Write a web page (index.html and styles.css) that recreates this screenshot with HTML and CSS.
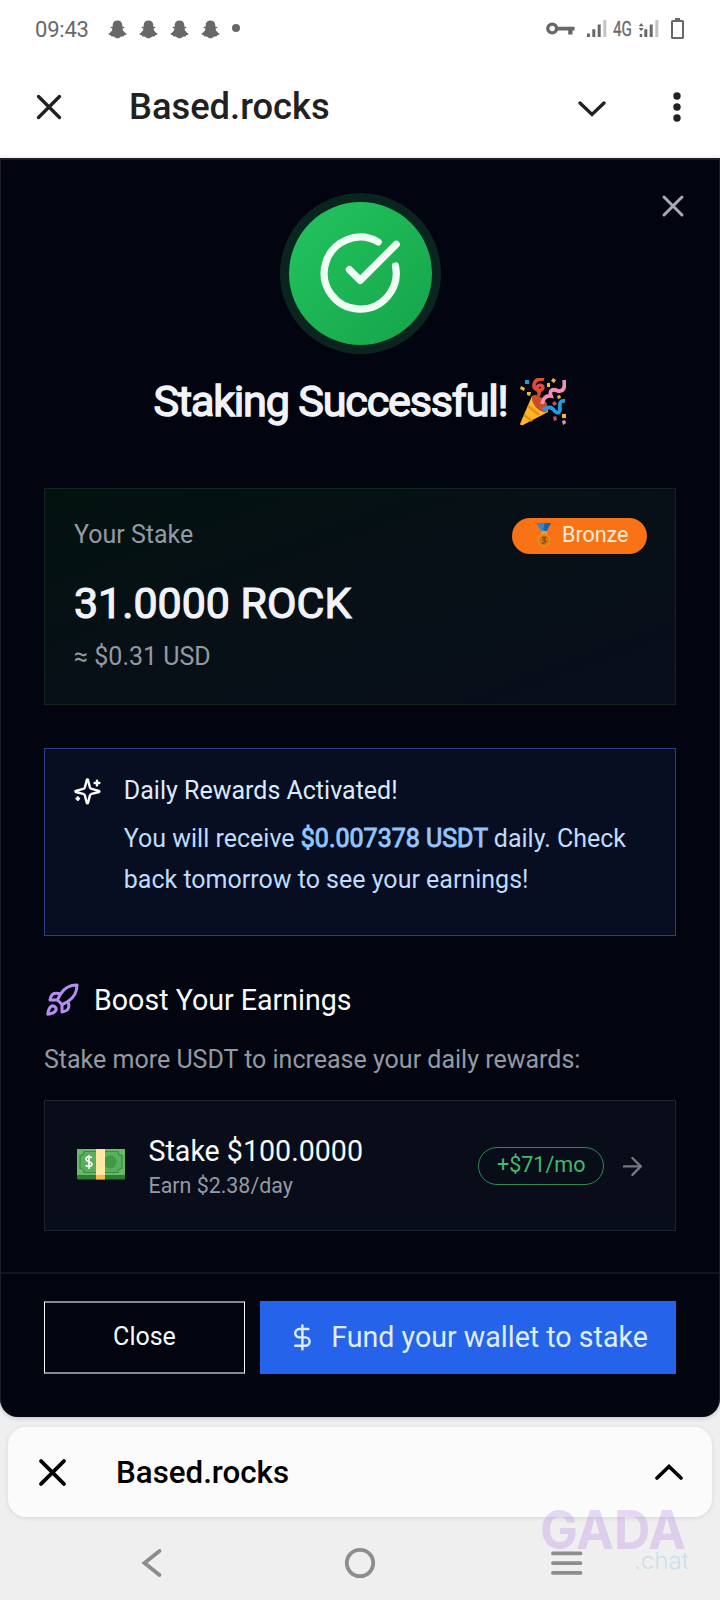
FILE: index.html
```html
<!DOCTYPE html>
<html lang="en">
<head>
<meta charset="utf-8">
<meta name="viewport" content="width=device-width, initial-scale=1">
<title>Based.rocks</title>
<link rel="stylesheet" href="styles.css">
</head>
<body>
<svg class="defs" aria-hidden="true">
  <symbol id="ghost" viewBox="0 0 19 19"><path d="M9.500 .5c-3 0-4.800 2-4.800 4.700v1.600c-.7.200-1.700-.2-2.100.3-.4.700.8 1.300 1.900 1.700-.4 2-2 3.900-4 5-.5.500.6 1.200 2.200 1.500.5.100.2 1.200.8 1.300.9.100 2-.2 3 .3.900.6 1.700 1.400 3 1.400s2.100-.8 3-1.400c1-.5 2.100-.2 3-.3.600-.1.300-1.200.8-1.300 1.600-.3 2.700-1 2.200-1.500-2-1.100-3.600-3-4-5 1.100-.4 2.300-1 1.900-1.700-.4-.5-1.400-.1-2.100-.3V5.200C14.300 2.500 12.500.5 9.500.5z"/></symbol>
  <symbol id="cross" viewBox="0 0 24 24"><path d="M18 6 6 18M6 6l12 12"/></symbol>
</svg>

<div class="status">
  <span class="clock">09:43</span>
  <div class="ghosts">
    <svg><use href="#ghost"/></svg><svg><use href="#ghost"/></svg><svg><use href="#ghost"/></svg><svg><use href="#ghost"/></svg>
    <i class="more-dot"></i>
  </div>
  <div class="signals">
    <svg class="key" viewBox="0 0 29 13"><circle cx="6.200" cy="6.500" r="4.400" fill="none" stroke="#686868" stroke-width="3.400"/><path d="M11 4.700h17.500v3.800h-2v4h-4.300v-4H11z"/></svg>
    <svg class="bars" viewBox="0 0 20 18"><path d="M0 13.500h3V17H0zM5.300 9.300h3V17h-3zM10.700 4.500h3V17h-3z"/><path class="weak" d="M16.300 0h3v17h-3z"/></svg>
    <span class="net">4G</span>
    <svg class="bars" viewBox="0 0 20 18"><path d="M.7 14h2.500v3H.7zM5.300 9.300h3V17h-3zM10.700 4.500h3V17h-3zM2.200 3l2.500 3.300H-.3zM2.200 11.300-.3 8h5z"/><path class="weak" d="M16.300 0h3v17h-3z"/></svg>
    <svg class="battery" viewBox="0 0 13 21"><path d="M4 0h5v3H4z"/><rect x="1" y="3" width="11" height="17" rx=".6" fill="none" stroke="#686868" stroke-width="2"/></svg>
  </div>
</div>

<header class="app-bar">
  <svg class="bar-close" viewBox="0 0 26 26"><path d="M2.500 2.500l21 21M23.500 2.500l-21 21"/></svg>
  <h1>Based.rocks</h1>
  <svg class="bar-down" viewBox="0 0 28 16"><path d="M2 2l12 11.500L26 2"/></svg>
  <svg class="bar-menu" viewBox="0 0 8 30"><circle cx="4" cy="4" r="3.700"/><circle cx="4" cy="15" r="3.700"/><circle cx="4" cy="26" r="3.700"/></svg>
</header>

<main class="modal">
  <svg class="line modal-close"><use href="#cross"/></svg>
  <div class="success">
    <svg class="line check" viewBox="0 0 24 24"><path d="M21.801 10A10 10 0 1 1 17 3.335"/><path d="m9 11 3 3L22 4"/></svg>
  </div>
  <h2 class="title"><span>Staking Successful!</span>
    <svg class="party" viewBox="0 0 46 48"><path d="M12 18 0 46q1 2 3 1l25-13Q28 20 12 18z" fill="#fdb827"/><path d="m8 28 11 9M4 37l8 6" stroke="#f08a13" stroke-width="2.600"/><ellipse cx="20" cy="25.500" rx="5.500" ry="10.500" transform="rotate(-42 20 25.500)" fill="#c94b2c"/><path d="M24 1.500q-8-2-10 5c-1 6 8 8 9 3 0-4-7-2-6 1 1 3 4 4 1 7" fill="none" stroke="#dc4b3e" stroke-width="3.600"/><path d="M44 2q2 12-6 11c-6-3-9 0-7 5-6-1-8 3-9 8" fill="none" stroke="#f48fb1" stroke-width="3.800"/><path d="M45 23c-7-1-5 6-5 9-1 5-5 2-7-1-3-3-7-1-10 1" fill="none" stroke="#239ae0" stroke-width="3.800"/><g fill="#f5b82e"><path d="m1 8 4 2-1 3-4-2zM7 14l4 0-1 4-3-1zM27 5h3v4h-3zM33 0l3 2-2 3-3-2zM37 18l3-1 1 3-3 1zM42 36h4v4h-4z"/></g><path d="M5 2h4v4H5z" fill="#239ae0"/><path d="m32 25 3-2 2 3-3 2zM33 39l3-1 1 4-3 1z" fill="#c95058"/><path d="m42 43 3-1 1 3-3 2z" fill="#f48fb1"/></svg>
  </h2>

  <section class="card stake">
    <div class="stake-head">
      <span class="muted">Your Stake</span>
      <span class="badge"><svg class="medal" viewBox="0 0 16 25"><path d="M0 0h15L10 9H6z" fill="#2c8ad3"/><path d="M9 0h6l-5 9-3-3z" fill="#1764ad"/><path d="M5 8h6v4H5z" fill="#e99b26"/><circle cx="8" cy="17.500" r="6.800" fill="#e58d22"/><circle cx="8" cy="17.500" r="5" fill="#d97512"/><path d="M6 14.500h3.500L7.500 17c3 0 3 3.500-1.500 3" fill="none" stroke="#8a4510" stroke-width="1.300"/></svg>Bronze</span>
    </div>
    <div class="amount">31.0000 ROCK</div>
    <div class="muted usd">≈ $0.31 USD</div>
  </section>

  <section class="card rewards">
    <svg class="line sparkles" viewBox="0 0 24 24"><path d="M9.937 15.500A2 2 0 0 0 8.500 14.063l-6.135-1.582a.5.500 0 0 1 0-.962L8.500 9.936A2 2 0 0 0 9.937 8.500l1.582-6.135a.5.500 0 0 1 .963 0L14.063 8.500A2 2 0 0 0 15.500 9.937l6.135 1.581a.5.500 0 0 1 0 .964L15.500 14.063a2 2 0 0 0-1.437 1.437l-1.582 6.135a.5.500 0 0 1-.963 0zM20 3v4M22 5h-4M4 17v2M5 18H3"/></svg>
    <div>
      <h3>Daily Rewards Activated!</h3>
      <p>You will receive <b>$0.007378 USDT</b> daily. Check<br>back tomorrow to see your earnings!</p>
    </div>
  </section>

  <div class="boost">
    <svg class="line rocket" viewBox="0 0 24 24"><path d="M4.500 16.500c-1.500 1.260-2 5-2 5s3.740-.5 5-2c.71-.84.7-2.130-.09-2.910a2.180 2.180 0 0 0-2.910-.09z"/><path d="m12 15-3-3a22 22 0 0 1 2-3.950A12.880 12.880 0 0 1 22 2c0 2.720-.78 7.500-6 11a22.350 22.350 0 0 1-4 2z"/><path d="M9 12H4s.55-3.030 2-4c1.620-1.080 5 0 5 0M12 15v5s3.030-.55 4-2c1.080-1.620 0-5 0-5"/></svg>
    <h3>Boost Your Earnings</h3>
  </div>
  <p class="muted boost-sub">Stake more USDT to increase your daily rewards:</p>

  <section class="card option">
    <svg class="money" viewBox="0 0 48 31"><rect width="48" height="30.500" rx="1" fill="#2e7d32"/><rect width="48" height="26" rx="1" fill="#66bb6a"/><path d="M7 2.500h34q0 4 4 4v13q-4 0-4 4H7q0-4-4-4v-13q4 0 4-4z" fill="#5aaf5e" stroke="#388e3c" stroke-width="1.200"/><circle cx="33" cy="13" r="6.500" fill="#3f9843"/><path d="M19 0h9v26h-9z" fill="#ffe7a4"/><path d="M19 26h9v4.500h-9z" fill="#ffb74d"/><path d="M15 8.500q-6-2-6 1.500c0 3 6 2.500 6 5.500q-1 3.500-6.500 1M12 6v14" fill="none" stroke="#fff" stroke-width="1.600"/></svg>
    <div class="option-text">
      <div class="option-name">Stake $100.0000</div>
      <div class="option-earn">Earn $2.38/day</div>
    </div>
    <span class="pill">+$71/mo</span>
    <svg class="line arrow" viewBox="0 0 24 24"><path d="M5 12h14M12 5l7 7-7 7"/></svg>
  </section>

  <footer class="actions">
    <button class="btn close">Close</button>
    <button class="btn fund"><svg class="line dollar" viewBox="0 0 24 24"><path d="M12 2v20M17 5H9.500a3.500 3.500 0 0 0 0 7h5a3.500 3.500 0 0 1 0 7H6"/></svg><span>Fund your wallet to stake</span></button>
  </footer>
</main>

<div class="mini-bar">
  <svg class="mini-close" viewBox="0 0 26 26"><path d="M2 2l22 22M24 2 2 24"/></svg>
  <span class="mini-title">Based.rocks</span>
  <svg class="mini-up" viewBox="0 0 28 17"><path d="M2 14 14 2.500 26 14"/></svg>
</div>

<nav class="sys-nav">
  <svg viewBox="0 0 32 32"><path d="M23.500 4 8.500 16l15 12"/></svg>
  <svg viewBox="0 0 32 32"><circle cx="16" cy="16" r="13.200"/></svg>
  <svg viewBox="0 0 32 32"><path d="M2 6.400h27.500M2 16.100h27.500M2 25.900h27.500"/></svg>
</nav>

<div class="watermark">
  <svg class="wm-top" viewBox="0 0 146 40"><text class="wm-name" x="0" y="39.500" textLength="146" lengthAdjust="spacingAndGlyphs">GADA</text></svg>
  <svg class="wm-bottom" viewBox="0 0 56 22"><text class="wm-chat" x="0" y="20" textLength="55" lengthAdjust="spacingAndGlyphs">.chat</text></svg>
</div>
</body>
</html>
```
FILE: styles.css
```css
* { box-sizing: border-box; }
body {
  margin: 0;
  width: 720px;
  height: 1600px;
  position: relative;
  overflow: hidden;
  background: #efefef;
  font-family: Roboto, "Noto Sans", sans-serif;
}
h1, h2, h3, p { margin: 0; font-weight: 400; }
svg { display: block; flex: none; }
.defs { position: absolute; width: 0; height: 0; }
.line { fill: none; stroke: currentColor; stroke-width: 2; stroke-linecap: round; stroke-linejoin: round; }

/* Status bar */
.status { height: 58px; padding: 0 35px; background: #fff; display: flex; align-items: center; color: #686868; fill: #686868; }
.clock { font-size: 22px; letter-spacing: -0.2px; width: 73px; padding-top: 1px; }
.ghosts { display: flex; align-items: center; gap: 12px; }
.ghosts svg { width: 19px; height: 19px; }
.more-dot { width: 8px; height: 8px; border-radius: 50%; background: #686868; margin-top: -2px; }
.signals { margin-left: auto; display: flex; align-items: center; }
.key { width: 29px; height: 13px; margin: -1px 12px 0 0; }
.bars { width: 20px; height: 18px; overflow: visible; }
.weak { fill: #c4c4c4; }
.net { font-size: 19.5px; width: 18px; margin: 0 8px 0 6px; transform: scaleX(.78); transform-origin: 0 50%; white-space: nowrap; -webkit-text-stroke: .3px #686868; }
.battery { width: 13px; height: 21px; margin: -1px 1px 0 12px; }

/* Title bar */
.app-bar { height: 100px; background: #fff; display: flex; align-items: center; padding: 0 39px 2px 36px; color: #212121; }
.app-bar path { fill: none; stroke: #212121; stroke-width: 3.300; stroke-linecap: round; }
.bar-close { width: 26px; height: 26px; margin: 0 1px 0 0; }
.app-bar h1 { font-size: 36.3px; font-weight: 500; margin-left: 66px; line-height: 50px; }
.bar-down { width: 28px; height: 16px; margin: 3px 67px 0 auto; }
.bar-menu { width: 8px; height: 30px; fill: #212121; }

/* Modal */
.modal {
  position: relative;
  height: 1259px;
  padding: 42px 43px 0;
  background: #020510;
  color: #f8fafc;
  border: 1px solid #191e27;
  border-top-width: 2px;
  border-bottom: 0;
  border-radius: 0 0 18px 18px;
  box-shadow: 0 1px 5px rgba(0,0,0,.2);
}
.modal-close { position: absolute; right: 28px; top: 27.500px; width: 36px; height: 36px; color: #a9acb5; }
.modal-close use { transform: scale(1); }
.success {
  width: 143px; height: 143px; margin: 0 auto;
  border-radius: 50%;
  background: linear-gradient(135deg, #22c55e, #16a34a);
  box-shadow: 0 0 0 9px #0a241f;
  display: grid; place-items: center;
}
.check { width: 86.4px; height: 86.4px; color: #f0fdf4; }
.title { display: flex; justify-content: center; align-items: center; gap: 13px; height: 58px; margin-top: 28px; font-size: 43.2px; line-height: 58px; letter-spacing: -1.22px; color: #f1f3f8; -webkit-text-stroke: 1.4px #f1f3f8; white-space: nowrap; }
.party { width: 46px; height: 48px; }
.muted { color: #949aa5; font-size: 25px; }
.card { border: 1px solid #1f2631; }

.stake { height: 217px; margin-top: 57px; padding: 29px 28px 0 29px; border-color: #12251f; background: linear-gradient(160deg, #03120f, #071017 50%, #090e1b); }
.stake-head { height: 36px; display: flex; justify-content: space-between; line-height: 34px; }
.badge { width: 135px; height: 36px; border-radius: 18px; background: #f97316; color: #ffedd5; font-size: 21.5px; line-height: 33px; padding-left: 24px; display: flex; gap: 10px; }
.medal { width: 16px; height: 25px; margin-top: 5px; }
.amount { font-size: 42.900px; line-height: 58px; margin-top: 20px; -webkit-text-stroke: 1.2px #f1f3f8; color: #f1f3f8; }
.usd { line-height: 36px; margin-top: 7px; }

.rewards { height: 188px; margin-top: 43px; padding: 24.500px 28px 0; display: flex; gap: 22px; border-color: #26408a; background: #080e21; }
.sparkles { width: 28.8px; height: 28.8px; margin-top: 3px; color: #fff; }
.rewards h3 { font-size: 25px; line-height: 34px; color: #dbeafe; }
.rewards p { font-size: 25px; line-height: 41px; margin-top: 10.500px; color: #bfdbfe; white-space: nowrap; }
.rewards b { font-weight: 400; color: #93c5fd; -webkit-text-stroke: .9px #93c5fd; }

.boost { display: flex; align-items: center; gap: 14px; height: 36px; margin-top: 46px; }
.rocket { width: 36px; height: 36px; color: #b78cf2; }
.boost h3 { font-size: 28.600px; line-height: 36px; }
.boost-sub { line-height: 36px; margin-top: 24px; white-space: nowrap; }
.option { height: 131px; margin-top: 22px; padding: 0 28px 0 32px; display: flex; align-items: center; background: #080d19; border-color: #20262f; }
.money { width: 48px; height: 31px; margin-top: -3px; }
.option-text { margin-left: 23.500px; }
.option-name { font-size: 28.600px; line-height: 40px; }
.option-earn { font-size: 21.4px; line-height: 29px; color: #949aa5; }
.pill { width: 126px; height: 38px; margin-left: auto; border: 1px solid #2d8950; border-radius: 19px; color: #43b96d; font-size: 21.5px; line-height: 33px; text-align: center; }
.arrow { width: 28.8px; height: 28.8px; margin: 2px 0 0 14px; color: #727782; }

.actions { display: flex; gap: 15px; margin: 41px -43px 0; padding: 27px 43px 0; border-top: 2px solid #10151f; }
.btn { height: 73px; padding: 0; border: 0; font-family: inherit; font-size: 25px; color: #f8fafc; }
.close { width: 201px; background: transparent; border: solid; border-color: #858991 #f8fafc; border-width: 2px 1px; padding-bottom: 3px; }
.fund { width: 416px; background: #2563eb; color: #dfeefe; font-size: 28.600px; display: flex; align-items: center; padding: 0 0 1px 28px; gap: 14.500px; white-space: nowrap; }
.dollar { width: 28.8px; height: 28.8px; }

/* Minimised app bar */
.mini-bar { height: 90px; margin: 10px 8px 0; padding: 0 29px 0 31px; display: flex; align-items: center; border-radius: 18px; background: #fbfbfb; box-shadow: 0 1px 5px rgba(0,0,0,.1); }
.mini-bar path { fill: none; stroke: #000; stroke-width: 3.600; stroke-linecap: round; }
.mini-close { width: 27px; height: 27px; }
.mini-title { font-size: 31.3px; font-weight: 500; margin-left: 50px; color: #000; }
.mini-up { width: 28px; height: 17px; margin-left: auto; }

.sys-nav { height: 83px; padding: 30px 137px 0 136px; display: flex; justify-content: space-between; }
.sys-nav svg { width: 32px; height: 32px; fill: none; stroke: #8d8d8d; stroke-width: 3.800; stroke-linecap: round; }

/* Watermark laid over the bottom bars */
.watermark { position: absolute; left: 540px; top: 1509px; width: 150px; display: flex; flex-direction: column; }
.watermark svg { overflow: visible; }
.wm-top { width: 146px; height: 40px; }
.wm-bottom { width: 56px; height: 22px; margin-left: 94px; }
.wm-name { font: 700 53px Inter, Roboto, sans-serif; fill: #a66fe0; fill-opacity: .25; }
.wm-chat { font: 300 23px Inter, Roboto, sans-serif; fill: #8fd3ea; fill-opacity: .45; }
```
